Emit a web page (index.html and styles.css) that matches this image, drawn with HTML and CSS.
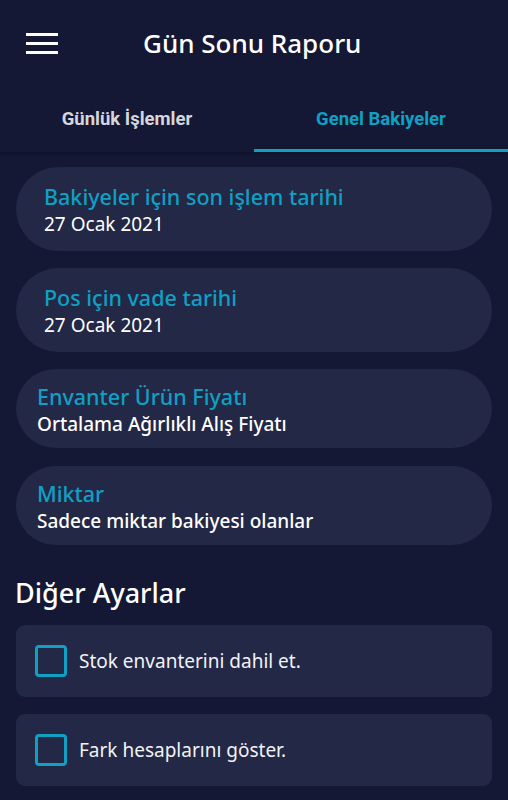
FILE: index.html
```html
<!DOCTYPE html>
<html lang="tr">
<head>
<meta charset="utf-8">
<link rel="stylesheet" href="styles.css">
</head>
<body>
<div class="app">
  <header class="topbar">
    <div class="menu"><span></span><span></span><span></span></div>
    <h1 class="title">Gün Sonu Raporu</h1>
  </header>
  <nav class="tabs">
    <div class="tab">Günlük İşlemler</div>
    <div class="tab active">Genel Bakiyeler</div>
  </nav>
  <main class="content">
    <div class="pill">
      <div class="pill-title">Bakiyeler için son işlem tarihi</div>
      <div class="pill-value">27 Ocak 2021</div>
    </div>
    <div class="pill">
      <div class="pill-title">Pos için vade tarihi</div>
      <div class="pill-value">27 Ocak 2021</div>
    </div>
    <div class="pill pill-b">
      <div class="pill-title">Envanter Ürün Fiyatı</div>
      <div class="pill-value">Ortalama Ağırlıklı Alış Fiyatı</div>
    </div>
    <div class="pill pill-b">
      <div class="pill-title">Miktar</div>
      <div class="pill-value">Sadece miktar bakiyesi olanlar</div>
    </div>
    <h2 class="section">Diğer Ayarlar</h2>
    <div class="check-card">
      <span class="box"></span>
      <span class="check-label">Stok envanterini dahil et.</span>
    </div>
    <div class="check-card">
      <span class="box"></span>
      <span class="check-label">Fark hesaplarını göster.</span>
    </div>
  </main>
</div>
</body>
</html>
```
FILE: styles.css
```css
html, body {
  margin: 0;
  padding: 0;
  background: #141834;
}
body {
  font-family: "Noto Sans", "Open Sans", sans-serif;
  color: #ffffff;
}
.app {
  width: 508px;
  min-height: 800px;
  background: #141834;
  overflow: hidden;
}
.topbar {
  height: 88px;
  display: flex;
  align-items: center;
}
.menu {
  width: 32px;
  margin-left: 26px;
  margin-top: -2px;
  display: flex;
  flex-direction: column;
  gap: 6px;
}
.menu span {
  display: block;
  height: 3px;
  background: #ffffff;
}
.title {
  margin: -2px 0 0 85px;
  font-size: 26px;
  font-weight: 500;
  color: #ffffff;
}
.tabs {
  display: flex;
  height: 64px;
  box-shadow: 0 2px 3px rgba(0,0,0,0.25);
}
.tab {
  flex: 1;
  display: flex;
  align-items: center;
  justify-content: center;
  font-family: Roboto, sans-serif;
  font-weight: 700;
  font-size: 18.5px;
  color: #d6d6da;
  padding-bottom: 2px;
  box-sizing: border-box;
}
.tab.active {
  color: #0fa0c4;
  border-bottom: 3px solid #0fa0c4;
  padding-bottom: 0;
}
.content {
  padding: 15px 16px 0 16px;
  display: flex;
  flex-direction: column;
}
.pill {
  background: #222846;
  border-radius: 42px;
  height: 84px;
  box-sizing: border-box;
  padding: 15px 28px 0 28px;
  margin-bottom: 17px;
}
.pill-b {
  height: 79px;
  padding: 13px 21px 0 21px;
  margin-bottom: 18px;
}
.pill-b + .pill-b { margin-bottom: 0; }
.pill-title {
  color: #0fa0c4;
  font-size: 21.5px;
  font-weight: 500;
  line-height: normal;
  white-space: nowrap;
}
.pill-value {
  color: #ffffff;
  font-size: 19px;
  line-height: normal;
  white-space: nowrap;
}
.pill-b .pill-value {
  font-weight: 500;
  font-size: 19px;
}
.section {
  margin: 28px 0 0 -1px;
  font-size: 27px;
  font-weight: 500;
  line-height: 40px;
  height: 40px;
}
.check-card {
  background: #222846;
  border-radius: 9px;
  height: 72px;
  margin-top: 12px;
  display: flex;
  align-items: center;
  padding-left: 19px;
  box-sizing: border-box;
}
.check-card + .check-card { margin-top: 17px; }
.box {
  width: 32px;
  height: 32px;
  box-sizing: border-box;
  border: 3px solid #0fa0c4;
  border-radius: 4px;
  flex: none;
}
.check-label {
  margin-left: 12px;
  font-size: 19px;
  color: #f2f2f4;
}
```
